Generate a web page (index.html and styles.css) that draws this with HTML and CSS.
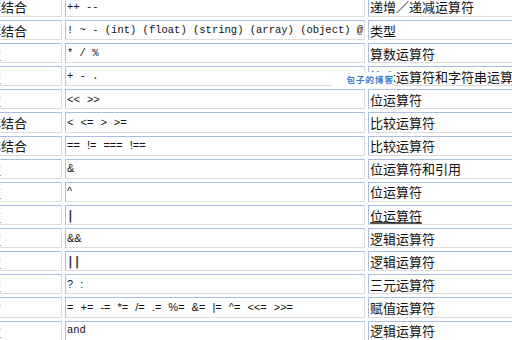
FILE: index.html
```html
<!DOCTYPE html>
<html lang="zh">
<head>
<meta charset="utf-8">
<link rel="stylesheet" href="styles.css">
</head>
<body>
<div class="table">
  <div class="cell">非结合</div><div class="cell op mono">++ --</div><div class="cell desc">递增／递减运算符</div>
  <div class="cell">非结合</div><div class="cell op mono">! ~ - (int) (float) (string) (array) (object) @</div><div class="cell desc">类型</div>
  <div class="cell">左</div><div class="cell op mono">* / %</div><div class="cell desc">算数运算符</div>
  <div class="cell">左</div><div class="cell op mono">+ - .</div><div class="cell desc">算术运算符和字符串运算符</div>
  <div class="cell">左</div><div class="cell op sans">&lt;&lt; &gt;&gt;</div><div class="cell desc">位运算符</div>
  <div class="cell">非结合</div><div class="cell op sans">&lt; &lt;= &gt; &gt;=</div><div class="cell desc">比较运算符</div>
  <div class="cell">非结合</div><div class="cell op sans">== != === !==</div><div class="cell desc">比较运算符</div>
  <div class="cell">左</div><div class="cell op sans">&amp;</div><div class="cell desc">位运算符和引用</div>
  <div class="cell">左</div><div class="cell op sans">^</div><div class="cell desc">位运算符</div>
  <div class="cell">左</div><div class="cell op sans bar">|</div><div class="cell desc"><span class="under">位运算符</span></div>
  <div class="cell">左</div><div class="cell op sans">&amp;&amp;</div><div class="cell desc">逻辑运算符</div>
  <div class="cell">左</div><div class="cell op sans bar">||</div><div class="cell desc">逻辑运算符</div>
  <div class="cell">左</div><div class="cell op sans">? :</div><div class="cell desc">三元运算符</div>
  <div class="cell">右</div><div class="cell op sans">= += -= *= /= .= %= &amp;= |= ^= &lt;&lt;= &gt;&gt;=</div><div class="cell desc">赋值运算符</div>
  <div class="cell">左</div><div class="cell op mono">and</div><div class="cell desc">逻辑运算符</div>
</div>
<div class="mark">包子的博客</div>
</body>
</html>
```
FILE: styles.css
```css
html, body {
  margin: 0;
  padding: 0;
  background: #fff;
  overflow: hidden;
  width: 512px;
  height: 340px;
  position: relative;
}
.table {
  display: grid;
  grid-template-columns: 77px 300px 220px;
  grid-auto-rows: 20.14px;
  column-gap: 3px;
  row-gap: 3px;
  margin-left: -15px;
  margin-top: -3.2px;
  font-family: "Noto Sans CJK SC", sans-serif;
  font-size: 13px;
  color: #111;
}
.cell {
  box-sizing: border-box;
  border-top: 1px solid #a9c0e4;
  border-left: 1px solid #a9c0e4;
  border-right: 1px solid #dcdcdc;
  border-bottom: 1px solid #dcdcdc;
  padding-left: 2px;
  display: flex;
  align-items: center;
  white-space: nowrap;
  overflow: hidden;
  line-height: 1;
}
.op { padding-left: 1px; }
.mono {
  font-family: "Liberation Mono", monospace;
  font-size: 10.5px;
}
.sans {
  font-family: "Liberation Sans", sans-serif;
  font-size: 11px;
  word-spacing: 4px;
}
.bar {
  font-family: "DejaVu Sans", sans-serif;
  font-size: 13px;
  font-weight: bold;
  word-spacing: 0;
  letter-spacing: 2px;
  color: #333;
  padding-left: 2px;
}
.desc { padding-left: 1px; }
.under {
  text-decoration-line: underline;
  text-decoration-color: #555;
  text-decoration-thickness: 2px;
  text-underline-offset: 1px;
  text-decoration-skip-ink: none;
}
.mark {
  position: absolute;
  left: 332px;
  top: 72px;
  width: 62px;
  height: 15px;
  background: #fff;
  color: #2f7fd8;
  font-family: "Noto Sans CJK SC", sans-serif;
  font-size: 8.5px;
  font-weight: bold;
  letter-spacing: 1px;
  line-height: 15px;
  text-align: right;
}
```
